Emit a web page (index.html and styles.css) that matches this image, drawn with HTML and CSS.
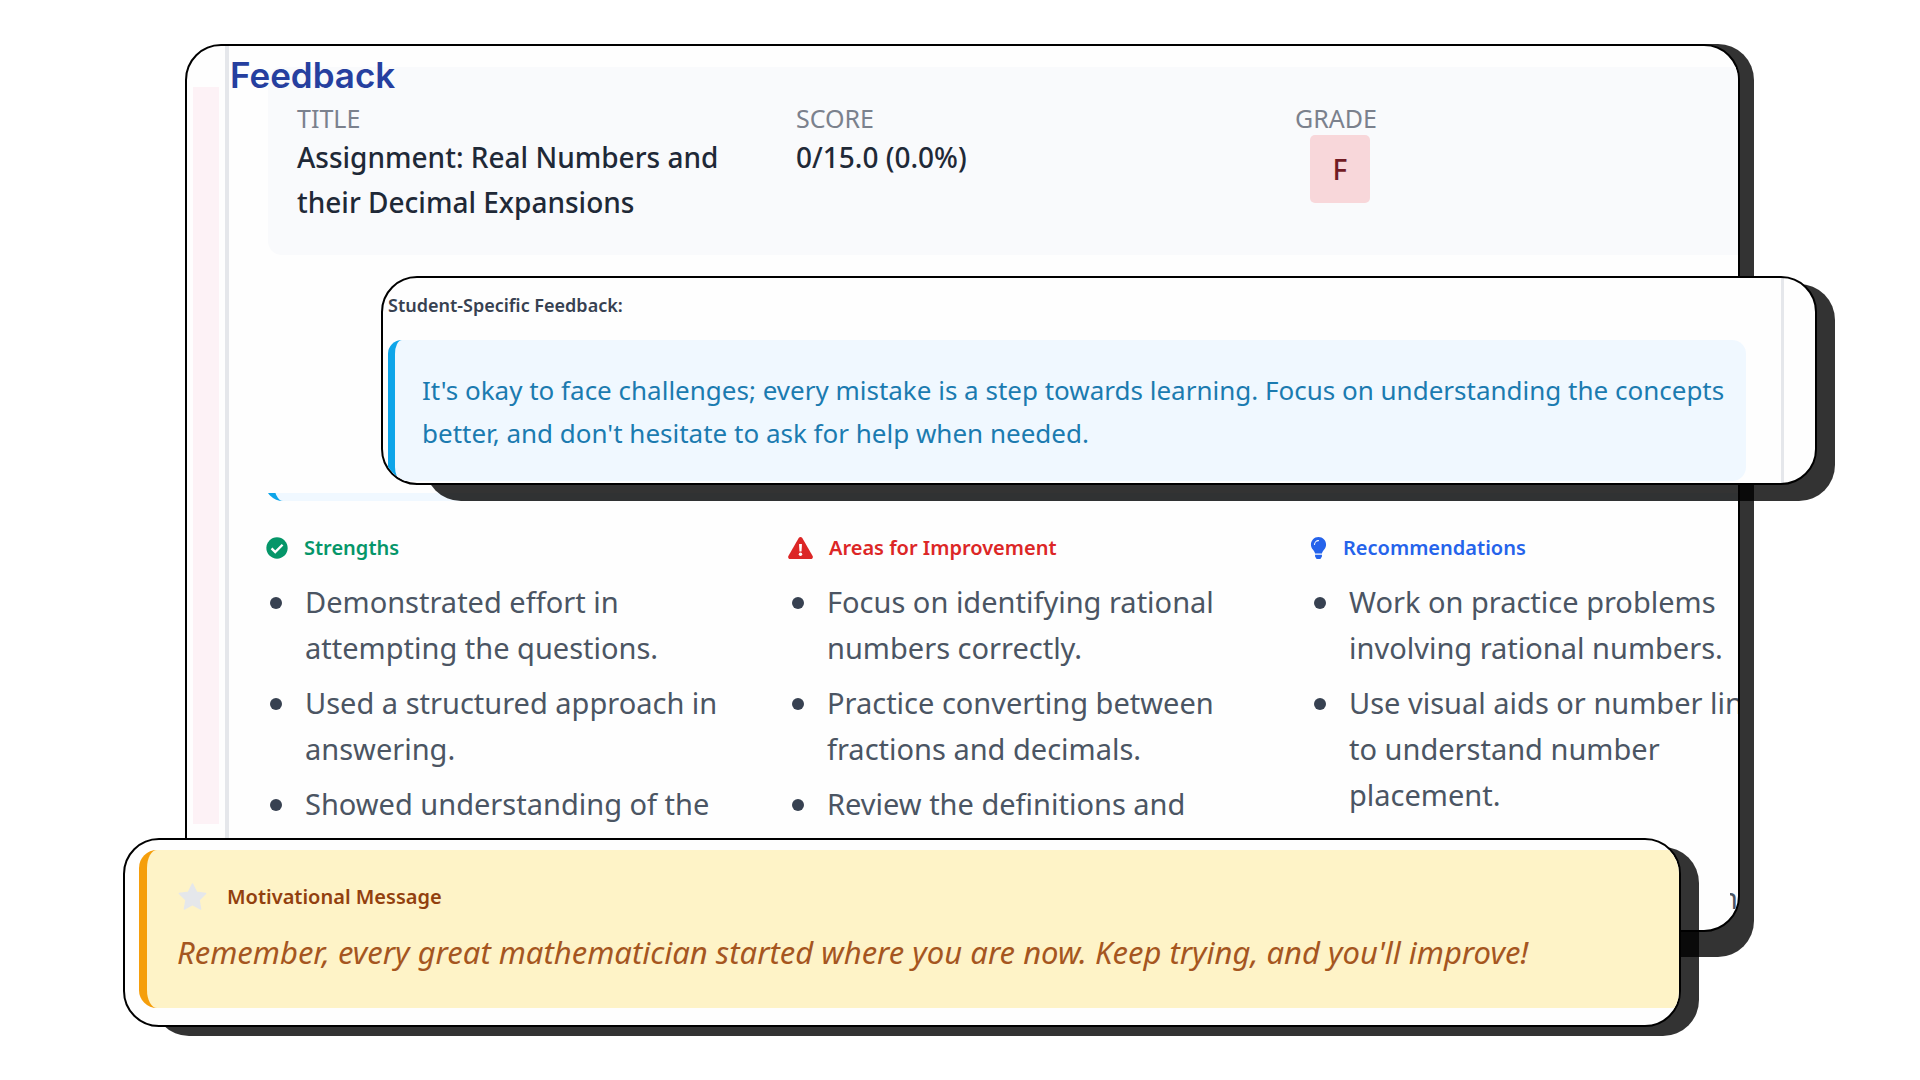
FILE: index.html
```html
<!DOCTYPE html>
<html lang="en">
<head>
    <meta charset="UTF-8">
    <meta name="viewport" content="width=device-width, initial-scale=1.0">
    <title>Feedback</title>
    <link rel="stylesheet" href="styles.css">
</head>
<body>
<main class="board">
    <section class="card report">
        <div class="report-inner">
            <div class="side-strip"></div>
            <div class="report-body">
                <h1>Feedback</h1>
                <div class="summary">
                    <div class="summary-item">
                        <span class="label">TITLE</span>
                        <span class="value">Assignment: Real Numbers and their Decimal Expansions</span>
                    </div>
                    <div class="summary-item">
                        <span class="label">SCORE</span>
                        <span class="value">0/15.0 (0.0%)</span>
                    </div>
                    <div class="summary-item">
                        <span class="label">GRADE</span>
                        <span class="grade">F</span>
                    </div>
                </div>
                <div class="quote-end"></div>
                <div class="columns">
                    <div class="column">
                        <h2 class="strengths">
                            <svg width="22" height="22" viewBox="0 0 512 512"><circle cx="256" cy="256" r="248" fill="currentColor"/><path d="M130 265l85 85 170-170" fill="none" stroke="#fff" stroke-width="56"/></svg>
                            Strengths
                        </h2>
                        <ul>
                            <li>Demonstrated effort in attempting the questions.</li>
                            <li>Used a structured approach in answering.</li>
                            <li>Showed understanding of the concept of roots.</li>
                        </ul>
                    </div>
                    <div class="column">
                        <h2 class="areas">
                            <svg width="25" height="22" viewBox="0 0 576 512"><path d="M570 440c18 32-5 72-42 72H48c-37 0-60-40-42-72L246 24c19-32 65-32 84 0z" fill="currentColor"/><path d="M254 165h68l-10 170h-48z" fill="#fff"/><circle cx="288" cy="400" r="40" fill="#fff"/></svg>
                            Areas for Improvement
                        </h2>
                        <ul>
                            <li>Focus on identifying rational numbers correctly.</li>
                            <li>Practice converting between fractions and decimals.</li>
                            <li>Review the definitions and properties of rational numbers.</li>
                        </ul>
                    </div>
                    <div class="column">
                        <h2 class="recommendations">
                            <svg width="17" height="22" viewBox="0 0 352 512"><path d="M176 0C74 0 0 82 0 176c0 45 16 85 44 116 17 19 43 60 52 92h160c9-32 35-73 52-92 28-31 44-71 44-116C352 79 273 0 176 0zM96 412h160v44l-28 42q-8 14-24 14h-56q-16 0-24-14l-28-42z" fill="currentColor"/><path d="M84 176c0-50 42-92 92-92" fill="none" stroke="#fff" stroke-width="24" stroke-linecap="round"/></svg>
                            Recommendations
                        </h2>
                        <ul>
                            <li>Work on practice problems involving rational numbers.</li>
                            <li>Use visual aids or number lines to understand number placement.</li>
                            <li>Seek more resources.</li>
                        </ul>
                    </div>
                </div>
            </div>
            <span class="cutoff">n</span>
        </div>
    </section>

    <section class="card student">
        <div class="student-inner">
            <h2>Student-Specific Feedback:</h2>
            <p>It's okay to face challenges; every mistake is a step towards learning. Focus on understanding the concepts better, and don't hesitate to ask for help when needed.</p>
        </div>
    </section>

    <section class="card motivation">
        <div class="motivation-inner">
            <div class="message">
                <h2>
                    <svg width="31" height="28" viewBox="0 0 576 512"><path d="M288 12l76 154 170 25-123 120 29 169-152-80-152 80 29-169L42 191l170-25z" fill="currentColor" stroke="currentColor" stroke-width="24" stroke-linejoin="round"/></svg>
                    Motivational Message
                </h2>
                <p>Remember, every great mathematician started where you are now. Keep trying, and you'll improve!</p>
            </div>
        </div>
    </section>
</main>
</body>
</html>
```
FILE: styles.css
```css
body {
    font-family: 'Noto Sans', 'Open Sans', sans-serif;
    background-color: #fff;
    margin: 0;
}

h1, h2, p, ul {
    margin: 0;
}

/* Three cards that overlap each other on the board */
.board {
    position: relative;
    height: 1080px;
    overflow: hidden;
}

.card {
    position: absolute;
    box-sizing: border-box;
}

.card::before {
    content: "";
    position: absolute;
    background-color: rgba(0, 0, 0, 0.8);
    border-radius: 36px;
}

.report {
    left: 185px;
    right: 180px;
    top: 44px;
    height: 888px;
}

.report::before {
    inset: 0 -14px -25px 15px;
}

.student {
    left: 381px;
    right: 103px;
    top: 276px;
    height: 209px;
}

.student::before {
    inset: 8px -18px -16px 44px;
}

.motivation {
    left: 123px;
    right: 239px;
    top: 838px;
    height: 189px;
}

.motivation::before {
    inset: 9px -18px -9px 30px;
}

.report-inner, .student-inner, .motivation-inner {
    position: relative;
    box-sizing: border-box;
    height: 100%;
    background-color: #fefefe;
    border: 2px solid #000;
    border-radius: 36px;
    overflow: hidden;
}

/* Report card */
.report-inner {
    display: flex;
}

.side-strip {
    flex: none;
    width: 26px;
    height: 737px;
    margin: 41px 6px 0;
    background-color: #fdf2f6;
}

.report-body {
    flex: 1;
    min-width: 0;
    border-left: 4px solid #e5e7eb;
}

h1 {
    position: absolute;
    left: 43px;
    top: 9px;
    color: #263f9f;
    font-family: Inter, sans-serif;
    font-size: 35px;
    line-height: 40px;
    font-weight: 600;
}

.summary {
    box-sizing: border-box;
    display: grid;
    grid-template-columns: repeat(3, 499px);
    height: 188px;
    margin: 21px 0 0 39px;
    padding: 35px 29px;
    background-color: #f9fafc;
    border-radius: 14px 0 0 14px;
}

.summary-item {
    display: flex;
    flex-direction: column;
    align-items: flex-start;
}

.label {
    color: #7b818d;
    font-size: 25px;
    line-height: 33px;
}

.value {
    max-width: 450px;
    color: #1f2937;
    font-size: 28px;
    line-height: 45px;
    font-weight: 500;
}

.grade {
    box-sizing: border-box;
    width: 60px;
    height: 68px;
    margin-left: 15px;
    border-radius: 5px;
    background-color: #f8d7da;
    color: #721c24;
    font-size: 28px;
    line-height: 68px;
    font-weight: 500;
    text-align: center;
}

.quote-end {
    height: 30px;
    margin: 216px 0 0 36px;
    border-left: 9px solid #0ea5e9;
    border-radius: 0 0 0 18px;
    background-color: #f0f8ff;
    clip-path: inset(22px 0 0 0);
}

.columns {
    display: grid;
    grid-template-columns: repeat(3, 490px);
    column-gap: 32px;
    margin: 31px 0 0 37px;
}

h2 {
    font-size: 20px;
    line-height: 32px;
    font-weight: 600;
}

.column h2 {
    display: flex;
    align-items: center;
    gap: 16px;
}

.strengths {
    color: #059669;
}

.areas {
    color: #dc2626;
}

.recommendations {
    color: #2563eb;
}

ul {
    margin-top: 15px;
    padding-left: 39px;
    color: #4b5563;
    font-size: 29px;
    line-height: 46px;
    list-style: none;
}

li {
    position: relative;
    max-width: 430px;
    margin-bottom: 9px;
}

li::before {
    content: "";
    position: absolute;
    left: -35px;
    top: 18px;
    width: 12px;
    height: 12px;
    border-radius: 50%;
    background-color: #374151;
}

.cutoff {
    position: absolute;
    right: 0;
    bottom: 16px;
    display: flex;
    justify-content: flex-end;
    width: 8px;
    overflow: hidden;
    color: #4b5563;
    font-size: 29px;
    line-height: 32px;
}

/* Student feedback card */
.student-inner {
    padding: 11px 69px 0 5px;
    background-image: linear-gradient(#e5e7eb, #e5e7eb);
    background-size: 3px 100%;
    background-position: right 31px top;
    background-repeat: no-repeat;
}

.student h2 {
    color: #374151;
    font-size: 18px;
}

.student p {
    box-sizing: border-box;
    height: 141px;
    margin-top: 19px;
    padding: 29px 8px 27px 27px;
    border-left: 7px solid #0ea5e9;
    border-radius: 14px;
    background-color: #f0f8ff;
    color: #1b7bb0;
    font-size: 26px;
    line-height: 43px;
}

/* Motivational message card */
.motivation-inner {
    padding: 10px 0 0 14px;
}

.message {
    box-sizing: border-box;
    height: 158px;
    padding: 31px 30px;
    border-left: 8px solid #f59e0b;
    border-radius: 18px 0 0 18px;
    background-color: #fef3c7;
    color: #92400e;
}

.message h2 {
    display: flex;
    align-items: center;
    gap: 19px;
}

.message svg {
    color: #e5e7eb;
}

.message p {
    margin-top: 15px;
    color: #a5561f;
    font-size: 31px;
    line-height: 48px;
    font-style: italic;
}
```
